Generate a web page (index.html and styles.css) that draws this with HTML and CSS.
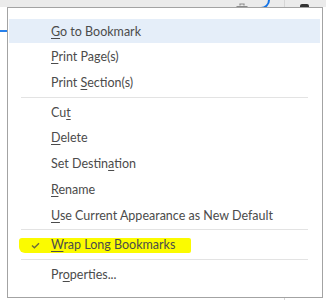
FILE: index.html
```html
<!DOCTYPE html>
<html>
<head>
<meta charset="utf-8">
<link rel="stylesheet" href="styles.css">
</head>
<body>
<div class="app">
  <div class="main">
    <div class="bar">
      <div class="field">
        <svg class="trash" width="12" height="6" viewBox="0 0 12 6"><path d="M4 3.5V2h4v1.5M0.5 4.5h11" fill="none" stroke="#8c8c8c" stroke-width="1.2"/></svg>
      </div>
    </div>
    <div class="tabline"></div>
  </div>
  <div class="side">
    <div class="bar"><span class="dark"></span></div>
  </div>
</div>
<ul class="menu">
  <li class="item hover"><span><u>G</u>o to Bookmark</span></li>
  <li class="item"><span><u>P</u>rint Page(s)</span></li>
  <li class="item"><span>Print <u>S</u>ection(s)</span></li>
  <li class="sep"></li>
  <li class="item"><span>Cu<u>t</u></span></li>
  <li class="item"><span><u>D</u>elete</span></li>
  <li class="item"><span>Set Destin<u>a</u>tion</span></li>
  <li class="item"><span><u>R</u>ename</span></li>
  <li class="item"><span><u>U</u>se Current Appearance as New Default</span></li>
  <li class="sep"></li>
  <li class="item checked">
    <span class="marker"></span>
    <svg class="check" width="9" height="7" viewBox="0 0 9 7"><path d="M1 3.6L3.4 5.8L8 1.2" fill="none" stroke="#6a6a3a" stroke-width="1.4"/></svg>
    <span class="label"><u>W</u>rap Long Bookmarks</span>
  </li>
  <li class="sep"></li>
  <li class="item"><span>Pr<u>o</u>perties...</span></li>
</ul>
</body>
</html>
```
FILE: styles.css
```css
* { box-sizing: border-box; }
html, body { margin: 0; padding: 0; }
body {
  width: 326px;
  height: 300px;
  overflow: hidden;
  background: #ffffff;
  position: relative;
  font-family: Lato, "Open Sans", sans-serif;
}
.app {
  display: flex;
  height: 300px;
}
.main {
  flex: 0 0 284px;
}
.side {
  flex: 1;
  border-left: 1px solid #d6d6d6;
}
.bar {
  height: 7px;
  background: #ebebeb;
  overflow: hidden;
  display: flex;
}
.field {
  margin-left: 226px;
  margin-top: -12px;
  width: 44px;
  height: 21px;
  border: 2px solid #1473e6;
  border-left: none;
  border-radius: 0 9px 9px 0;
  display: flex;
  align-items: flex-end;
  padding-left: 10px;
}
.trash {
  display: block;
  margin-bottom: -1px;
}
.dark {
  display: block;
  margin-left: 15px;
  margin-top: 4px;
  width: 9px;
  height: 6px;
  border-radius: 2px 2px 0 0;
  background: #333333;
}
.tabline {
  margin-top: 23px;
  width: 7px;
  height: 2px;
  background: #2680eb;
}
.menu {
  position: absolute;
  left: 7px;
  top: 7px;
  width: 316px;
  height: 291px;
  margin: 0;
  padding: 10.2px 0 0;
  list-style: none;
  background: #ffffff;
  border: 1px solid #a3a3a3;
  color: #4b4b4b;
  font-size: 12.5px;
}
.item {
  position: relative;
  height: 25.7px;
  padding: 1px 0 1px 42px;
  margin: 0 2px 0 1px;
  display: flex;
  align-items: center;
  background-clip: content-box;
}
.item u {
  text-decoration-thickness: 1px;
  text-underline-offset: 2px;
}
.item.hover {
  background-color: #e5eef9;
  background-clip: border-box;
  box-shadow: inset 0 1px #ffffff, inset 0 -1px #ffffff;
}
.sep {
  height: 4.2px;
  display: flex;
  align-items: center;
  padding: 0 14px 0 13px;
}
.sep::before {
  content: "";
  flex: 1;
  height: 1px;
  background: #e3e3e3;
}
.checked .marker {
  position: absolute;
  left: 10px;
  width: 172px;
  top: 5.5px;
  height: 15px;
  background: #fbfb00;
  border-radius: 3px 2px 2px 6px;
}
.checked .check {
  position: absolute;
  left: 22px;
  top: 10px;
}
.checked .label {
  position: relative;
}
```
